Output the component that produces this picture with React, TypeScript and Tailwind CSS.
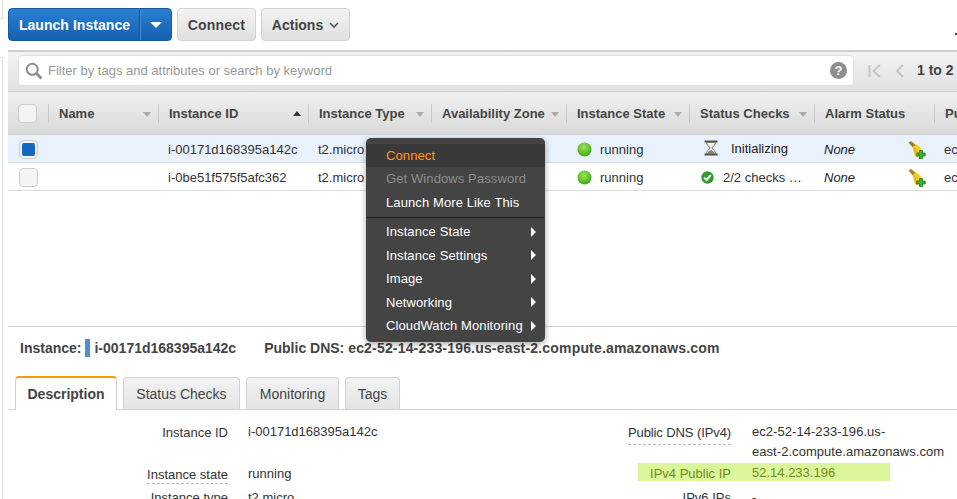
import React from "react";

const cols = [
  { label: "Name", w: "w-[110px]", arrow: "down" },
  { label: "Instance ID", w: "w-[150px]", arrow: "up" },
  { label: "Instance Type", w: "w-[123px]", arrow: "down" },
  { label: "Availability Zone", w: "w-[135px]", arrow: "down" },
  { label: "Instance State", w: "w-[123px]", arrow: "down" },
  { label: "Status Checks", w: "w-[125px]", arrow: "down" },
  { label: "Alarm Status", w: "w-[120px]", arrow: "" },
  { label: "Public DNS", w: "w-[120px]", arrow: "" },
];

function GreenDot() {
  return (
    <svg width="15" height="15" viewBox="0 0 15 15" className="shrink-0 -mt-px">
      <defs>
        <radialGradient id="gd" cx="45%" cy="35%" r="70%">
          <stop offset="0%" stopColor="#9fe35f" />
          <stop offset="60%" stopColor="#5fc22a" />
          <stop offset="100%" stopColor="#3f9a1a" />
        </radialGradient>
      </defs>
      <circle cx="7.5" cy="7.5" r="7" fill="url(#gd)" />
    </svg>
  );
}

function Hourglass() {
  return (
    <svg width="14" height="16" viewBox="0 0 14 16" className="shrink-0 -mt-[3px]">
      <rect x="0.5" y="0.5" width="13" height="2" fill="#55554c" />
      <rect x="0.5" y="13.5" width="13" height="2" fill="#55554c" />
      <path d="M2.5 2.5 L11.5 2.5 C11.5 5 8.6 6.6 8 8 C8.6 9.4 11.5 11 11.5 13.5 L2.5 13.5 C2.5 11 5.4 9.4 6 8 C5.4 6.6 2.5 5 2.5 2.5 Z" fill="#f0efe8" stroke="#77776a" strokeWidth="1" />
      <path d="M3.5 13.4 C4 11.4 6 10.8 7 9.8 C8 10.8 10 11.4 10.5 13.4 Z" fill="#85857a" />
    </svg>
  );
}

function CheckOk() {
  return (
    <svg width="13" height="13" viewBox="0 0 13 13" className="shrink-0">
      <circle cx="6.5" cy="6.5" r="6.2" fill="#2f9e2c" />
      <path d="M3.2 6.6 L5.6 9 L9.8 4.2" fill="none" stroke="#fff" strokeWidth="2" />
    </svg>
  );
}

function KeyBroom() {
  return (
    <svg width="18" height="18" viewBox="0 0 18 18" className="shrink-0">
      <path d="M0.5 1.5 L3 0 L8.5 4.5 L5.5 7.5 Z" fill="#a9801c" />
      <path d="M5 5.5 L8.5 3.5 C11.5 5.5 13.5 8 14 10.5 L11.5 15 L8 16.5 C6 13.5 5 9.5 5 5.5 Z" fill="#f6cb1c" />
      <path d="M6.5 7 C7.5 9.5 8 12 8.5 15" stroke="#d9a612" strokeWidth="1" fill="none" />
      <path d="M11.5 9.5 h3 v2.5 h2.7 v3 h-2.7 v2.7 h-3 v-2.7 h-2.7 v-3 h2.7 Z" fill="#35b52a" stroke="#17691a" strokeWidth="0.7" />
    </svg>
  );
}

function Caret({ dir }: { dir: string }) {
  if (dir === "up")
    return <span className="absolute right-[7px] top-[19px] h-0 w-0 border-x-[4px] border-b-[5px] border-x-transparent border-b-[#333]" />;
  if (dir === "down")
    return <span className="absolute right-[7px] top-[20px] h-0 w-0 border-x-[4px] border-t-[5px] border-x-transparent border-t-[#aaa]" />;
  return null;
}

function Box({ checked }: { checked?: boolean }) {
  return (
    <div className="flex h-[19px] w-[19px] items-center justify-center rounded-[4px] border border-[#ccc] bg-[#f4f4f4]">
      {checked && <div className="h-[13px] w-[13px] rounded-[2px] bg-[#1766c0]" />}
    </div>
  );
}

function Row({ id, sel, status }: { id: string; sel?: boolean; status: React.ReactNode }) {
  return (
    <div className={"flex h-[28px] items-center border-b border-[#dcdcdc] pt-[2px] text-[13px] text-[#333] " + (sel ? "bg-[#e8f1fc]" : "bg-white")}>
      <div className="-mt-px w-[40px] shrink-0 pl-[11px]">
        <Box checked={sel} />
      </div>
      <div className="w-[110px] shrink-0" />
      <div className="w-[150px] shrink-0 pl-[10px]">{id}</div>
      <div className="w-[123px] shrink-0 pl-[10px]">t2.micro</div>
      <div className="w-[135px] shrink-0" />
      <div className="flex w-[123px] shrink-0 items-center gap-[8px] pl-[11px]">
        <GreenDot />
        <span>running</span>
      </div>
      <div className="w-[125px] shrink-0">{status}</div>
      <div className="flex w-[120px] shrink-0 items-center pl-[10px]">
        <i className="w-[84px] text-[#222]">None</i>
        <KeyBroom />
      </div>
      <div className="shrink-0 pl-[10px] whitespace-nowrap">ec2-52-14</div>
    </div>
  );
}

function MenuItem({ label, sub, cls }: { label: string; sub?: boolean; cls?: string }) {
  return (
    <div className={"flex h-[23.5px] items-center justify-between pr-[9px] pl-[20px] tracking-[0.1px] " + (cls || "text-white")}>
      <span className="font-medium whitespace-nowrap">{label}</span>
      {sub && <span className="h-0 w-0 border-y-[5px] border-l-[5px] border-y-transparent border-l-white" />}
    </div>
  );
}

function Label({ children, dashed }: { children: React.ReactNode; dashed?: boolean }) {
  return (
    <span className={"whitespace-nowrap pb-[1px] " + (dashed ? "border-b border-dashed border-[#bbb]" : "")}>{children}</span>
  );
}

export default function App() {
  return (
    <div className="relative h-[499px] w-[957px] overflow-hidden bg-white font-['Liberation_Sans',Arial,sans-serif] text-[13px] text-[#333]">
      <div className="flex h-[50px] items-start gap-[5px] pt-[8px] pl-[8px]">
        <div className="flex h-[33px] w-[164px] items-stretch overflow-hidden rounded-[4px] border border-[#15589c] bg-gradient-to-b from-[#2a80d2] to-[#1560b0] text-white">
          <div className="flex w-[131px] items-center justify-center border-r border-[#0f4f92] pt-px pl-px text-[14px] font-bold tracking-[0.05px]">Launch Instance</div>
          <div className="flex flex-1 items-center justify-center border-l border-[#4a90d4]">
            <span className="h-0 w-0 border-x-[6px] border-t-[6px] border-x-transparent border-t-white" />
          </div>
        </div>
        <div className="flex h-[33px] w-[79px] items-center justify-center rounded-[4px] border border-[#d2d2d2] bg-gradient-to-b from-[#f3f3f3] to-[#e0e0e0] pt-px text-[14px] font-bold tracking-[0.2px] text-[#444]">Connect</div>
        <div className="flex h-[33px] w-[89px] items-center justify-center gap-[6px] rounded-[4px] border border-[#d2d2d2] bg-gradient-to-b from-[#f3f3f3] to-[#e0e0e0] pt-px text-[14px] font-bold text-[#444]">
          Actions
          <svg width="10" height="7" viewBox="0 0 10 7"><path d="M1 1 L5 5 L9 1" fill="none" stroke="#555" strokeWidth="1.6" /></svg>
        </div>
      </div>

      <div className="ml-[8px] w-[949px] overflow-hidden">
        <div className="h-[42px] border-t-2 border-b border-t-[#cfcfcf] border-b-[#d0d0d0] bg-gradient-to-b from-[#f2f2f2] to-[#e2e2e2] pt-[3px] pl-[10px]">
          <div className="flex items-center">
            <div className="flex h-[31px] w-[836px] shrink-0 items-center rounded-[4px] border border-[#e0e0e0] bg-white pr-[6px] pl-[6px]">
              <svg width="18" height="18" viewBox="0 0 18 18" className="shrink-0">
                <circle cx="7.3" cy="7.3" r="5.5" fill="none" stroke="#8c8c8c" strokeWidth="2" />
                <path d="M11.5 11.5 L16.5 16.5" stroke="#8c8c8c" strokeWidth="2.6" />
              </svg>
              <span className="ml-[5px] flex-1 pt-px text-[#999]">Filter by tags and attributes or search by keyword</span>
              <span className="flex h-[17px] w-[17px] items-center justify-center rounded-full bg-[#8e8e8e] text-[13px] leading-none font-bold text-white">?</span>
            </div>
            <svg width="14" height="14" viewBox="0 0 14 14" className="ml-[14px] shrink-0">
              <path d="M1.5 1 V13 M12 1 L5.5 7 L12 13" fill="none" stroke="#c4c4c4" strokeWidth="2" />
            </svg>
            <svg width="10" height="14" viewBox="0 0 10 14" className="ml-[13px] shrink-0">
              <path d="M8 1 L2 7 L8 13" fill="none" stroke="#c4c4c4" strokeWidth="2" />
            </svg>
            <span className="ml-[12px] text-[14px] font-bold whitespace-nowrap text-[#444]">1 to 2</span>
          </div>
        </div>

        <div className="flex h-[43px] items-center border-b border-[#d2d2d2] bg-gradient-to-b from-[#f0f0f0] to-[#d9d9d9]">
          <div className="flex h-[19px] w-[40px] shrink-0 items-center pl-[10px]">
            <Box />
          </div>
          {cols.map((c) => (
            <div key={c.label} className={"relative h-full shrink-0 " + c.w}>
              <div className="absolute top-[12px] bottom-[11px] left-0 w-px bg-[#c9c9c9]" />
              <div className="flex h-full items-center pt-px pl-[11px] font-bold whitespace-nowrap text-[#444]">{c.label}</div>
              <Caret dir={c.arrow} />
            </div>
          ))}
        </div>

        <Row
          id="i-00171d168395a142c"
          sel
          status={
            <div className="flex items-center gap-[13px] pl-[15px] text-[#222]">
              <Hourglass />
              <span className="-mt-[2px]">Initializing</span>
            </div>
          }
        />
        <Row
          id="i-0be51f575f5afc362"
          status={
            <div className="flex items-center gap-[9px] pl-[12px]">
              <CheckOk />
              <span>2/2 checks …</span>
            </div>
          }
        />

        <div className="h-[135px]" />
        <div className="h-px bg-[#d2d2d2]" />

        <div className="flex h-[41px] items-center pt-[1px] pl-[12px] text-[14px] font-bold whitespace-nowrap text-[#444]">
          <span>Instance:</span>
          <span className="mr-[4px] ml-[4px] h-[18px] w-[5px] bg-[#4f8fcb]" />
          <span>i-00171d168395a142c</span>
          <span className="ml-[28px]">Public DNS: <span className="tracking-[0.18px]">ec2-52-14-233-196.us-east-2.compute.amazonaws.com</span></span>
        </div>

        <div className="h-[9px]" />
        <div className="flex h-[33px] items-end gap-[6px] border-b border-[#d2d2d2] pl-[7px]">
          <div className="relative -mb-px flex h-[34px] w-[102px] items-center justify-center rounded-t-[4px] border-x border-t-2 border-x-[#d2d2d2] border-t-[#f59c00] bg-white text-[14px] font-bold text-[#444]">Description</div>
          {[
            ["Status Checks", "w-[117px]"],
            ["Monitoring", "w-[93px]"],
            ["Tags", "w-[55px]"],
          ].map(([t, w]) => (
            <div key={t} className={"flex h-[32px] items-center justify-center rounded-t-[4px] border-x border-t border-[#d2d2d2] bg-gradient-to-b from-[#f3f3f3] to-[#e4e4e4] pt-px text-[14px] text-[#444] " + w}>{t}</div>
          ))}
        </div>

        <div className="pt-[12px]">
          <div className="flex h-[42px] items-start">
            <div className="w-[220px] text-right leading-[22px]"><Label>Instance ID</Label></div>
            <div className="ml-[20px] w-[230px] leading-[20px]">i-00171d168395a142c</div>
            <div className="flex h-[23px] w-[253px] justify-end leading-[22px] tracking-[-0.1px]"><Label dashed>Public DNS (IPv4)</Label></div>
            <div className="ml-[21px] w-[200px] tracking-[0.05px] leading-[20px]">ec2-52-14-233-196.us-<br />east-2.compute.amazonaws.com</div>
          </div>
          <div className="flex h-[24px] items-start">
            <div className="w-[220px] text-right leading-[21px]"><Label dashed>Instance state</Label></div>
            <div className="ml-[20px] w-[230px] leading-[20px]">running</div>
            <div className="-mt-px ml-[160px] flex h-[18px] w-[252px] bg-[#dbf59b] text-[#6f8f1a]">
              <div className="w-[93px] text-right leading-[21px]">IPv4 Public IP</div>
              <div className="ml-[21px] leading-[20px]">52.14.233.196</div>
            </div>
          </div>
          <div className="flex h-[23px] items-start">
            <div className="w-[220px] text-right leading-[20px]"><Label>Instance type</Label></div>
            <div className="ml-[20px] w-[230px] leading-[20px]">t2.micro</div>
            <div className="flex w-[253px] justify-end leading-[20px]"><Label>IPv6 IPs</Label></div>
            <div className="ml-[21px] leading-[20px]">-</div>
          </div>
        </div>
      </div>

      {/* left frame edge */}
      <div className="absolute top-[57px] bottom-0 left-[2px] w-px bg-[#dcdcdc]" />
      <div className="absolute top-[57px] left-0 h-px w-[3px] bg-[#dcdcdc]" />
      <div className="absolute top-0 left-[2px] h-[18px] w-px bg-[#dcdcdc]" />
      <div className="absolute top-[18px] left-0 h-px w-[3px] bg-[#dcdcdc]" />
      <div className="absolute top-[33px] left-[955px] h-[2px] w-[2px] bg-[#444]" />

      {/* context menu */}
      <div className="absolute top-[138px] left-[366px] h-[204px] w-[179px] rounded-[5px] bg-[#444444] pt-[5.5px] text-[13px] shadow-[0_2px_6px_rgba(0,0,0,0.35)]">
        <MenuItem label="Connect" cls="bg-[#393939] text-[#ff9a1f]" />
        <MenuItem label="Get Windows Password" cls="text-[#8e8e8e]" />
        <MenuItem label="Launch More Like This" />
        <div className="mx-px mt-[3px] mb-[2px] h-px bg-[#222]" />
        <MenuItem label="Instance State" sub />
        <MenuItem label="Instance Settings" sub />
        <MenuItem label="Image" sub />
        <MenuItem label="Networking" sub />
        <MenuItem label="CloudWatch Monitoring" sub />
      </div>
    </div>
  );
}
